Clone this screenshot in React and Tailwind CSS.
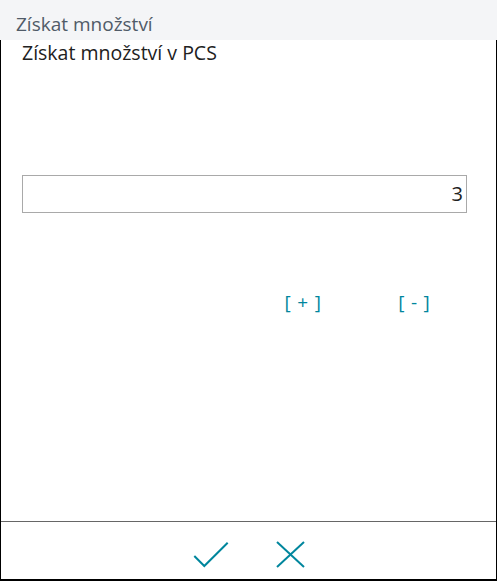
const TEAL = "#00869d";

function CheckIcon() {
  return (
    <svg width="36" height="27" viewBox="0 0 36 27" fill="none">
      <polyline points="1.3,15 11.3,25 34.7,1.7" stroke={TEAL} strokeWidth="2" />
    </svg>
  );
}

function CloseIcon() {
  return (
    <svg width="29" height="27" viewBox="0 0 29 27" fill="none">
      <line x1="1" y1="1" x2="28" y2="26" stroke={TEAL} strokeWidth="2" />
      <line x1="28" y1="1" x2="1" y2="26" stroke={TEAL} strokeWidth="2" />
    </svg>
  );
}

export default function App() {
  return (
    <div className="w-[497px] h-[581px] flex flex-col bg-white font-['Open_Sans',sans-serif]">
      <header className="h-10 shrink-0 bg-[#f4f5f7] pl-4 pt-[12px] text-[19px] leading-[24px] text-[#505b68]">
        Získat množství
      </header>

      <div className="flex-1 flex flex-col border-l border-r border-b-2 border-black">
        <div className="flex-1 flex flex-col pl-[21px] pr-[29px]">
          <div className="pt-[1px] text-[19.5px] leading-[24px] text-[#212121]">
            Získat množství v PCS
          </div>

          <div className="mt-[110px] h-[38px] border border-[#a9a9a9] flex items-center justify-end pr-[3px] text-[20px] text-[#212121]">
            3
          </div>

          <div className="mt-[77px] grid grid-cols-4 text-[19px] leading-[24px] text-[#00869d]">
            <div />
            <div />
            <button className="text-center pl-[6px] tracking-[0.8px] whitespace-pre">[ + ]</button>
            <button className="text-center pl-[6px] tracking-[0.8px] whitespace-pre">[ - ]</button>
          </div>
        </div>

        <footer className="h-[58px] shrink-0 border-t border-[#666666] flex items-center justify-center gap-[47px] pt-[7px]">
          <CheckIcon />
          <CloseIcon />
        </footer>
      </div>
    </div>
  );
}
